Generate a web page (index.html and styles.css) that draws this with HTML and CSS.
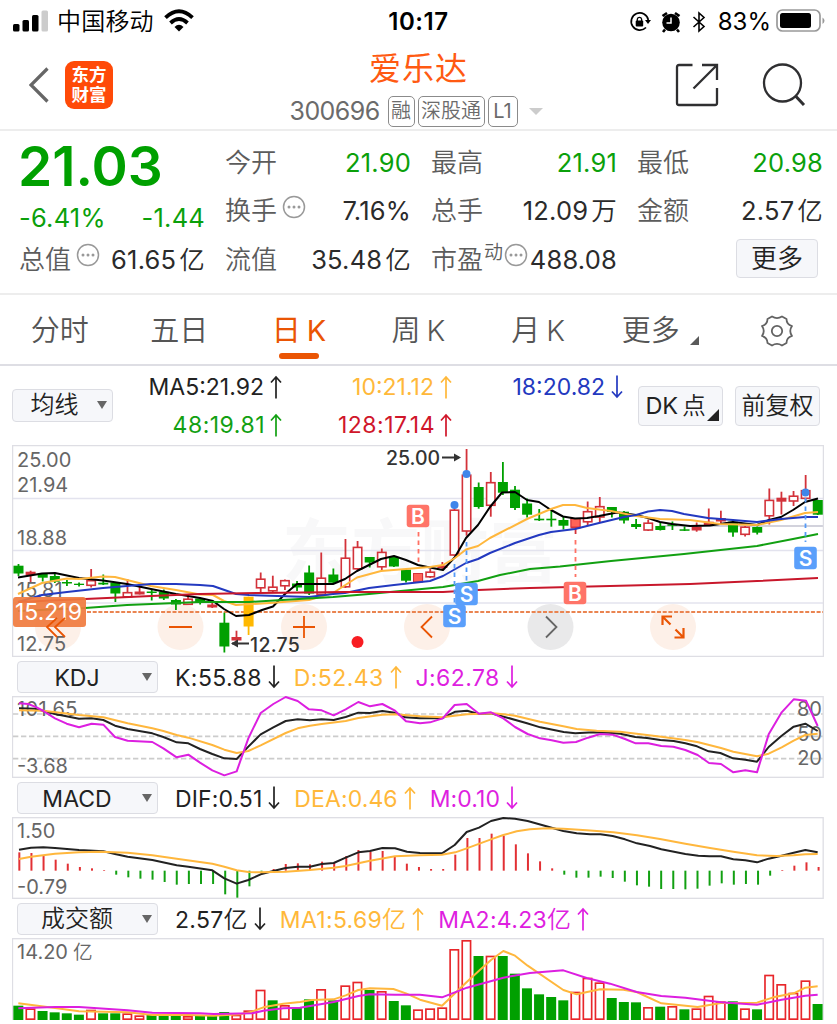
FILE: index.html
```html
<!DOCTYPE html>
<html lang="zh-CN">
<head>
<meta charset="utf-8">
<title>爱乐达 300696</title>
<link rel="stylesheet" href="styles.css">
</head>
<body>
<svg class="defs" width="0" height="0">
  <symbol id="up" viewBox="0 0 12 24"><path d="M6 23.500V2M1 7.500L6 2L11 7.500" fill="none" stroke="currentColor" stroke-width="1.700"/></symbol>
  <symbol id="down" viewBox="0 0 12 24"><path d="M6 .5V22M1 16.500L6 22L11 16.500" fill="none" stroke="currentColor" stroke-width="1.700"/></symbol>
  <symbol id="dots" viewBox="0 0 24 24"><circle cx="12" cy="12" r="10.500" fill="none" stroke="#999" stroke-width="1.500"/><g fill="#999"><circle cx="7" cy="12" r="1.500"/><circle cx="12" cy="12" r="1.500"/><circle cx="17" cy="12" r="1.500"/></g></symbol>
</svg>

<div class="status">
  <div class="carrier">
    <svg width="36" height="24" viewBox="0 0 36 24"><rect x="0" y="15" width="6.500" height="7.500" rx="1.500"/><rect x="9.500" y="11" width="6.500" height="11.500" rx="1.500"/><rect x="19" y="6" width="6.500" height="16.500" rx="1.500"/><rect x="28.500" y="1.500" width="6.500" height="21" rx="1.500" fill="#ccc"/></svg>
    <span>中国移动</span>
    <svg class="wifi" width="30" height="24" viewBox="0 0 30 24"><g fill="none" stroke="#000" stroke-width="3.800"><path d="M1.500 8.700Q15-4 28.500 8.700"/><path d="M6.500 14Q15 6 23.500 14"/></g><path d="M10.500 18Q15 13.500 19.500 18L15 22.500z"/></svg>
  </div>
  <div class="clock">10:17</div>
  <div class="indicators">
    <svg width="22" height="22" viewBox="0 0 22 22"><path d="M19.300 9A8.600 8.600 0 1 0 17 16.500" fill="none" stroke="#000" stroke-width="1.700"/><path d="M16 9h6l-3 4z"/><rect x="6.700" y="9.500" width="7.500" height="6" rx="1"/><path d="M8.300 10V8.200a2.200 2.200 0 0 1 4.300 0V10" fill="none" stroke="#000" stroke-width="1.300"/></svg>
    <svg class="alarm" width="20" height="22" viewBox="0 0 20 22"><circle cx="10" cy="11.500" r="8.800"/><path d="M1.500 5L6 2M18.500 5L14 2M4 18.500L2 21M16 18.500L18 21" stroke="#000" stroke-width="2.600"/><path d="M10 6.500v5.500H5.500" fill="none" stroke="#fff" stroke-width="1.500"/></svg>
    <svg class="bt" width="14" height="22" viewBox="0 0 14 22"><path d="M1.500 6L12 15.500L7 20V2L12 6.500L1.500 16" fill="none" stroke="#000" stroke-width="1.600"/></svg>
    <span>83%</span>
    <svg class="battery" width="50" height="24" viewBox="0 0 50 24"><rect x="1" y="1" width="43" height="21" rx="5.500" fill="none" stroke="#999" stroke-width="1.700"/><rect x="4" y="4" width="31" height="15" rx="2.500"/><path d="M46.500 8.500q4 3 0 6.500z" fill="#999"/></svg>
  </div>
</div>

<header class="header">
  <div class="nav">
    <svg width="20" height="36" viewBox="0 0 20 36"><path d="M18.500 1.500L2 18L18.500 34.500" fill="none" stroke="#666" stroke-width="3.200"/></svg>
    <div class="logo"><span>东方</span><span>财富</span></div>
  </div>
  <div class="title">
    <h1>爱乐达</h1>
    <div class="code"><span class="num">300696</span><b>融</b><b class="wide">深股通</b><b class="lv">L1</b><i class="caret"></i></div>
  </div>
  <div class="actions">
    <svg width="44" height="44" viewBox="0 0 44 44"><g fill="none" stroke="#2f2f31" stroke-width="2.300"><path d="M17.500 2H4Q2 2 2 4V40Q2 42 4 42H40Q42 42 42 40V25"/><path d="M27 2H42V17M18.500 25.500L41 3"/></g></svg>
    <svg width="44" height="44" viewBox="0 0 44 44"><g fill="none" stroke="#2f2f31"><circle cx="20.500" cy="20" r="18.500" stroke-width="2.300"/><path d="M33.500 33L42 42" stroke-width="3"/></g></svg>
  </div>
</header>

<section class="quote">
  <div class="cell"><strong class="price">21.03</strong></div>
  <div class="cell"><label>今开</label><em class="g">21.90</em></div>
  <div class="cell"><label>最高</label><em class="g">21.91</em></div>
  <div class="cell"><label>最低</label><em class="g">20.98</em></div>
  <div class="cell change"><em class="g first">-6.41%</em><em class="g">-1.44</em></div>
  <div class="cell"><label>换手</label><svg class="info"><use href="#dots"/></svg><em>7.16%</em></div>
  <div class="cell"><label>总手</label><em>12.09<u>万</u></em></div>
  <div class="cell"><label>金额</label><em>2.57<u>亿</u></em></div>
  <div class="cell"><label>总值</label><svg class="info"><use href="#dots"/></svg><em>61.65<u>亿</u></em></div>
  <div class="cell"><label>流值</label><em>35.48<u>亿</u></em></div>
  <div class="cell pe"><label>市盈</label><sup>动</sup><svg class="info tight"><use href="#dots"/></svg><em>488.08</em></div>
  <div class="cell more"><button class="btn">更多</button></div>
</section>

<nav class="tabs">
  <a>分时</a><a>五日</a><a class="on">日<s>K</s></a><a>周<s>K</s></a><a>月<s>K</s></a><a class="drop">更多<svg width="9" height="9" viewBox="0 0 9 9"><path d="M9 0V9H0z" fill="#5a5a5a"/></svg></a>
  <a><svg width="34" height="32" viewBox="0 0 34 32"><g fill="none" stroke="#636363" stroke-width="1.800"><path d="M12 1.500Q17 4.800 22 1.500L26.500 4Q26.500 9.500 32 11Q28.500 16 32 21Q26.500 22.500 26.500 28L22 30.500Q17 27.200 12 30.500L7.500 28Q7.500 22.500 2 21Q5.500 16 2 11Q7.500 9.500 7.500 4z" stroke-linejoin="round"/><circle cx="17" cy="16" r="5.200"/></g></svg></a>
</nav>

<section class="ma">
  <button class="btn select">均线<i class="arrow"></i></button>
  <div class="values">
    <span class="k">MA5:21.92<svg><use href="#up"/></svg></span>
    <span class="y">10:21.12<svg><use href="#up"/></svg></span>
    <span class="b">18:20.82<svg><use href="#down"/></svg></span>
    <span class="gr low">48:19.81<svg><use href="#up"/></svg></span>
    <span class="r low">128:17.14<svg><use href="#up"/></svg></span>
  </div>
  <button class="btn dk">DK<span>点</span><svg width="12" height="12" viewBox="0 0 12 12"><path d="M12 0V12H0z" fill="#222"/></svg></button>
  <button class="btn fq">前复权</button>
</section>

<svg class="chart main" viewBox="12 445 812 212"></svg>

<section class="ind">
  <button class="btn select">KDJ<i class="arrow"></i></button>
  <span class="k">K:55.88<svg><use href="#down"/></svg></span>
  <span class="y">D:52.43<svg><use href="#up"/></svg></span>
  <span class="m">J:62.78<svg><use href="#down"/></svg></span>
</section>
<svg class="chart kdj" viewBox="36 123 2436 246"></svg>

<section class="ind tightrow">
  <button class="btn select">MACD<i class="arrow"></i></button>
  <span class="k">DIF:0.51<svg><use href="#down"/></svg></span>
  <span class="y">DEA:0.46<svg><use href="#up"/></svg></span>
  <span class="m">M:0.10<svg><use href="#down"/></svg></span>
</section>
<svg class="chart macd" viewBox="36 486 2436 246"></svg>

<section class="ind vol">
  <button class="btn select">成交额<i class="arrow"></i></button>
  <span class="k">2.57<u>亿</u><svg><use href="#down"/></svg></span>
  <span class="y">MA1:5.69<u>亿</u><svg><use href="#up"/></svg></span>
  <span class="m">MA2:4.23<u>亿</u><svg><use href="#up"/></svg></span>
</section>
<svg class="chart volume" viewBox="36 114 2436 246"></svg>

<script src="chart.js"></script>
</body>
</html>
```
FILE: styles.css
```css
* { box-sizing: border-box; }
body { margin: 0; width: 837px; height: 1024px; overflow: hidden; background: #fff; color: #222; font-family: Inter, "Noto Sans CJK SC", sans-serif; font-weight: 400; }
.defs { position: absolute; }
em, i, u, s { font-style: normal; text-decoration: none; }
svg { flex: none; }

.status { height: 42px; display: grid; grid-template-columns: 1fr auto 1fr; align-items: center; padding: 0 11px 0 13px; color: #000; font-size: 24px; line-height: 30px; }
.carrier { display: flex; align-items: center; }
.carrier span { margin: 1px 0 0 8px; font-weight: 350; letter-spacing: .2px; }
.wifi { margin-left: 10px; }
.clock { font-weight: 600; font-size: 24px; letter-spacing: .6px; padding: 1px 2px 0 0; }
.indicators { display: flex; align-items: center; justify-content: flex-end; padding-top: 1px; }
.alarm { margin-left: 10px; }
.bt { margin: 0 12px 0 11px; }
.battery { margin-left: 5px; margin-top: -2px; }

.header { height: 89px; border-bottom: 2px solid #ededed; display: grid; grid-template-columns: 260px 1fr 260px; }
.nav { display: flex; align-items: center; padding: 0 0 2px 29px; gap: 16px; }
.logo { width: 48px; height: 48px; border-radius: 9px; background: #ff4a08; color: #fff; display: flex; flex-direction: column; align-items: center; justify-content: center; padding-bottom: 1px; font: 700 17.500px/20px "Noto Sans CJK SC", sans-serif; }
.title { display: flex; flex-direction: column; align-items: center; }
.title h1 { margin: 6px 0 0; font-size: 32px; line-height: 42px; font-weight: 400; letter-spacing: 1px; color: #ff5a12; }
.code { display: flex; align-items: center; margin: 5px 14px 0 0; height: 32px; color: #6b6b6b; }
.num { font-size: 25px; margin-right: 8px; letter-spacing: -.55px; width: 90px; }
.code b { height: 31px; width: 27px; border: 1.500px solid #8b8b8b; border-radius: 5px; font-weight: 350; font-size: 20px; line-height: 29px; text-align: center; margin-right: 3px; white-space: nowrap; }
.code b.wide { width: 67px; }
.code b.lv { width: 30px; font-weight: 400; }
.code .caret { margin: 0 -9px 0 8px; }
.caret { border: 7px solid transparent; border-top-color: #ccc; border-bottom: 0; }
.actions { display: flex; align-items: center; justify-content: flex-end; gap: 43px; padding: 0 31px 2px 0; }

.quote { height: 164px; border-bottom: 2px solid #ededed; padding: 7px 14px 0 19px; display: grid; grid-template-columns: repeat(4, 186px); column-gap: 20px; grid-auto-rows: 48.500px; }
.cell { display: flex; align-items: center; height: 48px; white-space: nowrap; }
.cell label { font-size: 26px; line-height: 36px; font-weight: 350; color: #5c5c5c; margin: 1px 0 0 0; }
.cell em { font-size: 25.500px; line-height: 36px; margin: 1px 0 0 auto; color: #2b2b2b; letter-spacing: .2px; }
.cell em.g { color: #0ba00b; }
.cell em.first { margin-left: 0; }
.cell u { margin-left: 3px; font-weight: 350; }
.price { font-size: 55px; font-weight: 600; color: #00a000; line-height: 48px; padding-top: 8px; margin-left: -1px; }
.change { padding-top: 14px; }
.info { width: 24px; height: 24px; margin: -8px 0 0 5px; }
.info.tight { margin-left: 1px; }
.cell sup { font-size: 19px; font-weight: 350; color: #5c5c5c; line-height: 20px; margin: -13px 0 0 1px; }
.more { justify-content: flex-end; padding: 0 5px 1px 0; }

.btn { display: flex; align-items: center; justify-content: center; margin: 0; padding: 0; border: 1.500px solid #dcdde3; border-radius: 4px; background: #f6f7fa; color: #222; font-family: inherit; font-weight: 350; white-space: nowrap; }
.more .btn { width: 82px; height: 39px; font-size: 26px; line-height: 36px; }

.tabs { height: 71px; border-bottom: 2px solid #dedee4; display: grid; grid-template-columns: repeat(7, 1fr); }
.tabs a { position: relative; display: flex; align-items: center; justify-content: center; font-size: 29px; font-weight: 350; color: #555; line-height: 40px; padding-top: 2px; }
.tabs s { font-size: 29px; margin-left: 6px; }
.tabs .on { color: #ea5504; font-weight: 400; }
.tabs .on::after { content: ""; position: absolute; left: 40px; bottom: 5px; width: 40px; height: 6px; border-radius: 3px; background: #ea5504; }
.tabs .drop { padding-left: 5px; }
.tabs .drop svg { margin: 19px 0 0 10px; }

.ma { height: 79px; display: flex; align-items: center; padding: 0 17px 0 12px; }
.arrow { border: 5px solid transparent; border-top: 8px solid #666; border-bottom: 0; }
.ma .select { width: 101px; height: 33px; font-size: 24px; line-height: 30px; padding: 0 0 1px 12px; }
.ma .select .arrow { margin: 0 0 0 18px; }
.values { width: 509px; height: 76px; display: grid; grid-template-columns: 169px 170px 171px; grid-template-rows: 38px 38px; font-size: 23px; }
.values span { display: flex; align-items: center; justify-content: flex-end; white-space: nowrap; }
.values .low { letter-spacing: .5px; }
.values svg { width: 12px; height: 24px; margin-left: 6px; }
.values .low svg { margin-left: 5px; }
.k { color: #222; } .y { color: #ffb83a; } .b { color: #2339c0; } .gr { color: #12a012; } .r { color: #d0162a; } .m { color: #de1fe0; }
.dk { width: 85px; height: 40px; margin-left: 16px; font-size: 23.500px; line-height: 34px; font-weight: 400; }
.dk span { margin: 0 0 0 4px; font-weight: 350; }
.dk svg { margin: 19px -3px 0 1px; }
.btn.fq { width: 85px; height: 40px; margin-left: 12px; font-size: 24px; line-height: 36px; padding: 0; }

.chart { display: block; width: 812px; margin-left: 12px; font-family: Inter, "Noto Sans CJK SC", sans-serif; }
.main { height: 212px; }
.kdj, .macd, .volume { height: 82px; }
.ind { height: 39px; display: flex; align-items: center; padding-left: 17px; font-size: 23px; letter-spacing: .4px; }
.tightrow { letter-spacing: .1px; }
.ind .select { position: relative; width: 141px; height: 32px; padding: 2px 21px 0 0; font-size: 23px; font-weight: 400; margin-right: 17px; letter-spacing: 0; }
.ind .select .arrow { position: absolute; right: 5px; top: 11px; }
.ind span { display: flex; align-items: center; margin-right: 14px; padding-top: 3px; white-space: nowrap; }
.ind svg { width: 12px; height: 24px; margin-left: 6px; }
.ind span svg { margin-top: -2px; }
.ind u { font-size: 24px; line-height: 30px; font-weight: 350; }
.vol span { padding-top: 2px; margin-right: 14px; letter-spacing: .3px; }
.vol .select { font-size: 24px; font-weight: 350; line-height: 30px; padding: 1px 21px 0 0; }
```
FILE: chart.js
```js
const RED = '#d3323a', GREEN = '#00a000', YELLOW = '#ffb73d', MAGENTA = '#dc1fe0', BLACK = '#222';
const line = (d, c, w) => `<polyline points="${d}" fill="none" stroke="${c}" stroke-width="${w}" stroke-linejoin="round"/>`;
const text = (x, y, s, size, c = '#666', extra = '') => `<text x="${x}" y="${y}" font-size="${size}" fill="${c}" ${extra}>${s}</text>`;

// type, body top, body bottom, high, low: R hollow rise, F filled rise, G fall, Y highlighted
const candles = [
['G',565.7,573.5,564,576],['F',571.7,575,570.7,583],['G',574,577.7,574,581.5],['G',576,581.7,574,583],['G',582,583.5,580,586],['G',583.7,585,582.5,586.5],
['R',580,586,569,587.5],['G',582.7,584.5,574.5,585],['G',582.5,593.5,582,602],['R',592,597.5,579,597.5],['F',591.5,594.5,586,594.5],['G',591.5,593,589,600.5],
['G',591.8,598.5,589.5,600],['G',600,604.5,599,610],['R',598.5,605,594.5,605],['G',598.5,603,597.5,604.5],['F',604.5,607.5,602.5,608],['G',622.7,646.5,612.7,652.5],
['F',637,640.5,630.7,642],['Y',596.7,626.5,596.7,635],['R',578.5,588.5,572.5,592],['R',586.5,591.5,575.7,592],['R',580,586.5,579.5,590],['G',583.5,587.5,581,591],
['G',572.5,593.5,565.5,595],['R',577.5,595,552.5,595],['G',574.5,582.7,568.5,583],['R',557.5,587.5,539,588],['R',546.7,569.5,541,570],['G',557,562.5,557,567.5],
['R',551.7,567.5,548.5,570],['G',557,566.5,556,567],['G',569.7,580.7,569,582.5],['F',573.5,581.7,573,582],['R',571.5,577.5,569,578],['F',565.5,568,562,570],
['R',509.5,555.7,505,556],['R',474.5,531.7,449,535.7],['G',487,507,482.5,508.7],['R',482,506,472,516.7],['G',482,492.7,462,495],['G',489.7,508,486,510],
['G',503.5,514.7,498.5,517.5],['G',518.7,520.3,509,521],['G',518.7,520.3,509,526.7],['G',520,525.7,516.7,529.5],['F',518.5,528.5,518,534],['R',511,522.5,501.5,526],
['R',506,517.7,497,522.7],['G',507,512,507,517.5],['G',511.7,520.5,511,523.5],['G',524,527,519,529],['R',522.5,530.7,519.5,531],['G',526,530,522.5,530.5],
['G',524.3,525.8,521.5,530],['G',529.3,530.8,526.5,531],['F',526.5,530.5,522.5,531.7],['F',521.7,525,508.5,525.5],['F',518,521.5,510.7,524],['G',521.7,532.5,519.5,536.7],
['R',526.5,535,526,536.5],['G',527,532.7,526.5,534.5],['R',499.7,516.5,488.5,524.5],['F',497.7,501.7,491.7,514.5],['R',495.5,501.7,491,506],['R',490,499,475,500],['G',500,514.7,500,515]];

let h = '<text x="282" y="577" font-size="69" font-weight="700" fill="#f8f8f9">东方财富</text>';
for (const y of [498.5, 550.5, 603]) h += `<path d="M13 ${y}H823" stroke="#e3e3ee" stroke-width="1.500"/>`;
h += '<path d="M660 526H823" stroke="#d2d2dc" stroke-width="1.800"/>';
h += '<rect x="12.500" y="445.500" width="811" height="211" fill="none" stroke="#dedee4" stroke-width="1.500"/>';
for (const x of [58, 180.5, 304, 427, 673]) h += `<circle cx="${x}" cy="627" r="23" fill="#fdf0e8"/>`;
h += '<circle cx="550.500" cy="627" r="23" fill="#e9e9ea"/><path d="M87 612H823" stroke="#ea8450" stroke-width="1.800" stroke-dasharray="4 1.700"/>';
candles.forEach(([t, a, b, hi, lo], i) => {
  const x = 18.5 + i * 12.11, c = t === 'G' ? GREEN : t === 'Y' ? '#ffb800' : RED;
  h += `<path d="M${x} ${hi}V${lo}" stroke="${c}" stroke-width="1.800"/>`;
  h += t === 'R' ? `<rect x="${x - 4.2}" y="${a + .7}" width="8.400" height="${b - a - 1.4}" fill="#fff" stroke="${c}" stroke-width="1.600"/>`
                 : `<rect x="${x - 5}" y="${a}" width="10" height="${b - a}" fill="${c}"/>`;
});
for (const [x, y] of [[418, 573.5], [575.5, 518.5]]) h += `<rect x="${x - 4.5}" y="${y}" width="9" height="8.500" fill="#ff6357" stroke="${RED}"/>`;
h += text(17, 597, '15.81', 20);
h += line('18,577.500 42,573.500 55,573 79,578 103,580.500 127,584 151,589 176,594 200,598 213,601 224,609 236,616 249,615 262,610 273,606.500 285,594 297,584 333,584 345,579 357,571 369,565 381,559 394,556 406,560 418,565 430,567.500 443,570 455,557 466,538 478,525 490,507 502,492.500 515,492 527,500 539,502 551,510 563,516.500 575,518.500 587,518 599,516 617,512.500 636,515 648,518 660,522 672,524 690,526 710,525.500 733,522 757,525 769,520 781,517 793,510 805,502 818,498.500', '#000', 2);
h += line('18,594 42,583 67,578.500 79,579 103,576.500 115,577 127,580 151,586 176,590 200,594.500 213,595 224,601 236,605 270,603 309,600 333,593 357,577.500 381,571 406,569 430,567 443,565 455,558 466,549.500 478,546 490,538 527,519 551,509 563,505 575,505 587,508 611,511 636,516 660,519 690,520 720,524 757,525 781,520 805,513 818,512', YELLOW, 2);
h += line('18,602 42,595 67,592 103,588 127,586 151,584 176,584 200,585 213,586 236,594 249,595 309,597 333,594 345,593 369,588 394,585 430,581 443,576 466,563 478,559 490,553 515,543 539,535 551,532 575,529 599,523 624,517 636,515 648,511.500 660,510 672,511 684,514 708,518 733,520 757,522 781,519 805,517 818,517', '#2339c0', 2);
h += line('18,611 85,608 127,605 176,603 200,602 249,602 282,600 333,597 369,594 443,587 478,581 500,575 530,569 560,566.500 611,561 684,554 757,546 793,539 818,534', '#12a012', 2);
h += line('18,602 85,599 151,596 200,594 260,593 345,592 443,592 478,590 530,588 610,586 690,584 757,581 818,578', '#c8172b', 2);
h += text(17, 467, '25.00', 20) + text(17, 492, '21.94', 20) + text(17, 544.5, '18.88', 20) + text(17, 650.5, '12.75', 20);
h += '<rect x="13" y="597" width="73" height="30" rx="3" fill="#f07b3e" fill-opacity=".92"/>' + text(15, 620, '15.219', 23, '#fff');
h += '<g fill="none" stroke="#ea5504" stroke-width="1.800"><path d="M57 618L47 627L57 637M65 618L55 627L65 637M169 627H192M293 627H315M304 616V638M432 616.500L421.500 627L432 637.500"/><path d="M662.500 625V616.500H672M663 617L670.500 624.500M683.500 628V637.500H674.500M683 637L675.500 629.500" stroke-width="2.200"/></g><path d="M546 616.500L556.500 627L546 637.500" fill="none" stroke="#666" stroke-width="1.800"/>';
h += '<g fill="none" stroke="#333" stroke-width="1.800"><path d="M442 457.500H459M232 643.500H249"/></g><path d="M454 453.500L461 457.500L454 461.500zM238 639.500L231 643.500L238 647.500z" fill="#333"/>';
h += text(386, 465, '25.00', 19.5, '#333', 'font-weight="500"') + text(250, 652, '12.75', 19.5, '#333', 'font-weight="500" letter-spacing=".3"');
h += '<circle cx="357.500" cy="642" r="6" fill="#f81d22"/>';
h += '<g fill="none" stroke-width="1.800" stroke-dasharray="4.500 4"><path d="M418.500 532V562M575.500 540V577" stroke="#ff7164"/><path d="M454.500 564V605M466.500 542V583M805.500 498V542" stroke="#559bf7"/></g>';
for (const [x, y] of [[454.5, 505], [466.5, 474], [805.5, 492.5]]) h += `<circle cx="${x}" cy="${y}" r="4" fill="#3f86ea"/>`;
for (const [x, y, s, c] of [[418, 516, 'B', '#ff7468'], [575, 593, 'B', '#ff7468'], [805.5, 558, 'S', '#5a9ffb'], [466.5, 594, 'S', '#5a9ffb'], [454.5, 616, 'S', '#5a9ffb']])
  h += `<rect x="${x - 11.3}" y="${y - 11.3}" width="22.600" height="22.600" rx="3" fill="${c}"/>` + text(x, y + 7.5, s, 21, '#fff', 'font-weight="600" text-anchor="middle"');
document.querySelector('.main').innerHTML = h;

// The three indicator charts use three units per pixel
const frame = (y, hgt) => `<rect x="37.500" y="${y}" width="2432" height="${hgt}" fill="none" stroke="#dedee4" stroke-width="4"/>`;
const X = i => 57 + i * 36.33;

h = frame(125, 242);
for (const y of [177, 244, 311]) h += `<path d="M39 ${y}H2468" stroke="#ccc" stroke-width="5" stroke-dasharray="16 8"/>`;
h += text(51, 184, '101.65', 60, '#666', 'letter-spacing="1"') + text(51, 354, '-3.68', 60);
[[80, 183], [50, 257], [20, 329]].forEach(([s, y]) => h += text(2466, y, s, 60, '#666', 'text-anchor="end"'));
h += line('57,160 105,161 165,177 237,191 275,190 310,195 345,212 383,222 457,235 490,246 530,262 565,265 600,282 637,297 673,310 710,312 745,275 782,238 820,217 857,198 893,193 930,196 965,193 1001,195 1037,186 1075,173 1110,174 1147,168 1185,173 1215,187 1260,190 1326,190 1366,170 1401,167 1436,177 1473,175 1511,185 1581,205 1621,217 1691,231 1726,235 1781,232 1826,233 1861,236 1906,246 1941,249 1981,255 2021,258 2056,265 2091,274 2126,289 2161,294 2199,310 2236,314 2271,320 2306,276 2344,243 2381,215 2416,206 2453,228', BLACK, 6);
h += line('57,166 130,167 237,180 310,187 383,205 457,220 490,228 530,240 565,248 637,270 673,284 710,294 745,288 782,271 857,234 893,220 930,212 965,207 1037,198 1075,189 1147,179 1185,178 1260,184 1326,187 1401,178 1480,175 1510,178 1545,182 1620,200 1690,214 1730,222 1790,227 1860,230 1910,236 1984,245 2056,255 2095,262 2163,279 2200,290 2271,304 2306,296 2345,277 2381,257 2416,240 2453,236', YELLOW, 6);
h += line('57,145 85,147 110,157 130,168 165,190 200,206 237,217 275,206 310,209 345,246 383,257 457,261 490,280 530,307 565,299 600,323 637,346 673,361 710,349 745,250 782,174 820,147 857,126 893,138 927,163 965,166 1001,181 1037,163 1075,141 1110,154 1147,147 1185,167 1218,199 1260,205 1290,202 1328,190 1364,150 1400,147 1437,176 1473,172 1510,190 1545,216 1583,237 1620,250 1655,256 1690,263 1728,261 1764,248 1801,237 1838,239 1875,252 1907,265 1945,265 1984,273 2020,275 2056,285 2093,300 2127,324 2163,327 2200,352 2236,346 2271,352 2306,238 2345,172 2381,133 2418,137 2453,213', MAGENTA, 6);
document.querySelector('.kdj').innerHTML = h;

h = frame(488, 242) + text(51, 548, '1.50', 60) + text(51, 717, '-0.79', 60);
[592,594,600,614,626,636,640,645,659,667,671,674,681,689,687,687,687,718,728,694,650,642,627,625,628,620,624,603,585,590,588,606,626,636,642,642,599,549,549,536,542,568,595,619,640,659,668,668,665,669,680,691,695,702,702,703,701,692,685,689,687,689,662,645,632,622,636]
  .forEach((y, i) => h += `<path d="M${X(i) + 1} 647V${y}" stroke="${y < 647 ? '#e23034' : '#12a012'}" stroke-width="6"/>`);
h += line('57,584 93,578 130,577 165,579 237,585 310,589 345,597 383,605 457,615 530,631 565,635 637,646 673,670 710,686 745,675 782,658 820,648 857,639 893,635 930,635 965,627 1001,624 1037,608 1075,592 1110,588 1147,579 1185,580 1221,590 1260,594 1326,595 1364,570 1400,531 1437,518 1473,498 1510,489 1545,491 1583,498 1690,528 1730,535 1770,538 1801,538 1838,543 1875,553 1911,565 1950,573 1984,583 2056,597 2095,602 2128,604 2163,604 2200,613 2236,616 2271,622 2306,611 2345,602 2381,593 2416,585 2453,592', BLACK, 6);
h += line('57,612 93,605 165,596 237,592 300,590 383,593 457,601 530,611 637,626 673,635 710,646 745,651 782,652 857,650 930,645 1001,638 1037,633 1110,617 1185,604 1260,601 1326,599 1366,592 1400,580 1473,553 1510,540 1550,529 1590,523 1640,520 1690,521 1760,526 1840,532 1911,541 1980,552 2056,566 2130,579 2200,590 2271,601 2330,603 2381,601 2416,598 2453,597', YELLOW, 6);
document.querySelector('.macd').innerHTML = h;

h = frame(116, 260) + text(51, 177, '14.20', 60) + text(219, 176, '亿', 59, '#666', 'font-weight="350"');
'G317 R325 G333 G337 G340 G344 R329 G340 G340 R340 R346 G344 G347 G347 R348 G347 G347 G336 R344 R331 R269 G301 R315 G324 G298 R267 G301 R256 R245 G270 R273 G303 G316 R328 R325 R322 R147 R120 G168 R167 G168 G221 G265 G283 G291 G301 R275 R233 R247 G294 G306 G307 R321 G320 R318 G328 R325 R287 R304 G304 R325 G328 R224 R252 R278 R241 G312'
  .split(' ').forEach((s, i) => {
    const x = X(i) - 2, y = +s.slice(1);
    h += s[0] === 'G' ? `<rect x="${x - 15}" y="${y}" width="30" height="${360 - y}" fill="${GREEN}"/>`
                      : `<rect x="${x - 12.5}" y="${y + 2.5}" width="25" height="${355 - y}" fill="#fff" stroke="#e8262a" stroke-width="5"/>`;
  });
h += line('55,310 165,324 237,334 383,337 457,345 565,345 640,347 720,343 756,335 790,322 850,311 900,306 935,300 1001,298 1037,286 1075,270 1110,265 1180,267 1218,280 1260,299 1326,317 1401,245 1437,212 1473,180 1510,153 1545,167 1583,197 1690,270 1730,283 1800,268 1870,269 1910,276 1984,310 2093,321 2163,309 2271,308 2320,292 2381,280 2416,263 2453,259', YELLOW, 6);
h += line('55,325 165,321 237,321 383,331 457,338 600,340 640,342 756,340 790,332 850,325 900,323 1001,306 1075,288 1110,283 1185,284 1260,284 1326,292 1401,263 1510,233 1590,219 1690,211 1760,234 1830,251 1910,276 1984,288 2056,293 2163,307 2271,314 2345,299 2416,287 2453,284', MAGENTA, 6);
document.querySelector('.volume').innerHTML = h;
```
